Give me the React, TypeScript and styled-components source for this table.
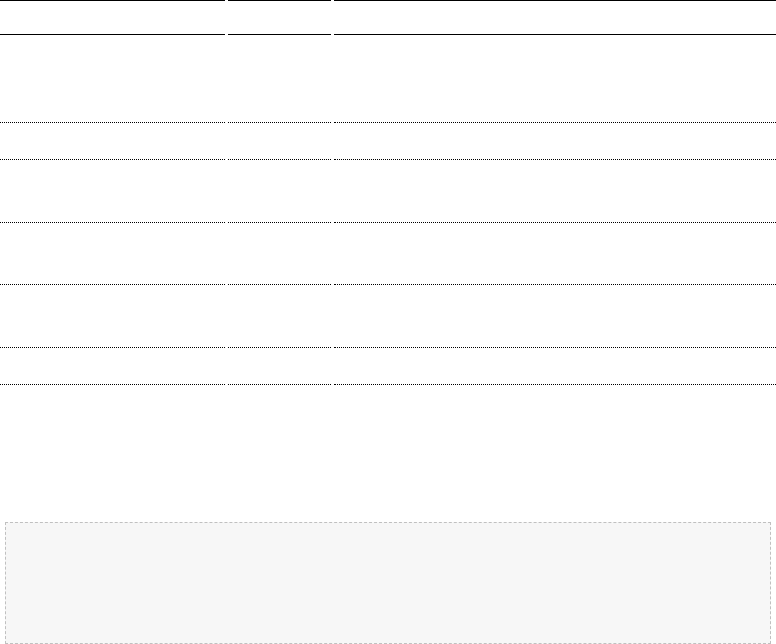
import React from 'react';
import styled, { createGlobalStyle } from 'styled-components';

const Global = createGlobalStyle`
  html, body {
    margin: 0;
    padding: 0;
    background: #ffffff;
    font-family: "Liberation Sans", Arial, sans-serif;
  }
`;

const rows = [88, 37, 63, 62, 63, 37];

function App() {
  return (
    <>
      <Global />
      <Page>
        <Table>
          <Head>
            <HeadCell $w={225} />
            <HeadCell $w={103} />
            <HeadCell $grow />
          </Head>
          {rows.map((h, i) => (
            <Row key={i} $h={h}>
              <Cell $w={225} />
              <Cell $w={103} />
              <Cell $grow />
            </Row>
          ))}
        </Table>
        <Note />
      </Page>
    </>
  );
}

export default App;

const Page = styled.div`
  display: flex;
  flex-direction: column;
  width: 776px;
`;

const Table = styled.div`
  display: flex;
  flex-direction: column;
`;

const Head = styled.div`
  display: flex;
  gap: 3px;
  height: 35px;
`;

const HeadCell = styled.div<{ $w?: number; $grow?: boolean }>`
  box-sizing: border-box;
  width: ${(p) => (p.$w ? `${p.$w}px` : 'auto')};
  flex: ${(p) => (p.$grow ? '1' : 'none')};
  border-top: 1px solid #000;
  border-bottom: 1px solid #000;
`;

const Row = styled.div<{ $h: number }>`
  display: flex;
  gap: 3px;
  height: ${(p) => p.$h}px;
`;

const Cell = styled.div<{ $w?: number; $grow?: boolean }>`
  box-sizing: border-box;
  width: ${(p) => (p.$w ? `${p.$w}px` : 'auto')};
  flex: ${(p) => (p.$grow ? '1' : 'none')};
  border-bottom: 1px dotted #000;
`;

const Note = styled.div`
  box-sizing: border-box;
  margin: 137px 5px 0 5px;
  height: 122px;
  background: #f7f7f7;
  border: 1px dashed #c0c0c0;
`;
